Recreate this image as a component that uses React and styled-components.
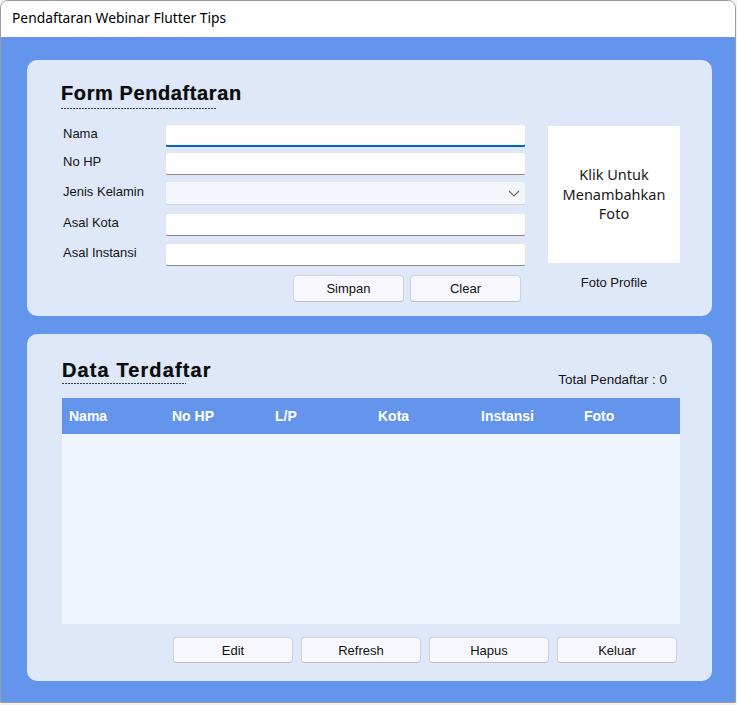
import React from 'react';
import styled, { createGlobalStyle } from 'styled-components';

const GlobalStyle = createGlobalStyle`
  html, body { margin: 0; padding: 0; background: #f2f2f2; }
  body { font-family: "Liberation Sans", Arial, sans-serif; color: #111; }
  * { box-sizing: border-box; }
`;

const Window = styled.div`
  width: 736px;
  height: 703px;
  border: 1px solid #9b9b9b;
  border-radius: 8px 8px 0 0;
  overflow: hidden;
  display: flex;
  flex-direction: column;
  background: #fff;
`;

const TitleBar = styled.div`
  height: 36px;
  flex: none;
  display: flex;
  align-items: center;
  padding: 0 0 3px 11px;
  background: #ffffff;
  font-family: "Noto Sans", "Liberation Sans", sans-serif;
  font-size: 13.8px;
  color: #000;
`;

const Client = styled.div`
  flex: 1;
  background: #6495ed;
  padding: 23px 23px 21px 26px;
  display: flex;
  flex-direction: column;
  gap: 18px;
`;

const Panel = styled.section`
  background: #dfe8f9;
  border-radius: 10px;
  padding: ${p => p.$pad};
  display: flex;
  flex-direction: column;
`;

const TitleBlock = styled.div`
  display: flex;
  flex-direction: column;
  align-items: flex-start;
`;

const Heading = styled.h2`
  margin: 0;
  font-size: 20px;
  line-height: 24px;
  font-weight: 700;
  letter-spacing: ${p => p.$ls || '0.6px'};
  color: #0d0d0d;
  text-shadow: 0 0 0.7px rgba(0, 0, 0, 0.5);
`;

const Dashes = styled.div`
  width: ${p => p.$w}px;
  height: 1px;
  margin-top: ${p => p.$gap}px;
  background: repeating-linear-gradient(90deg, #3c3c3c 0 2px, transparent 2px 3px);
`;

const FormArea = styled.div`
  display: flex;
  align-items: flex-start;
  margin-top: 15px;
`;

const Fields = styled.div`
  width: 465px;
  display: flex;
  flex-direction: column;
`;

const FieldRow = styled.div`
  display: grid;
  grid-template-columns: 104px 1fr;
  align-items: center;
  margin-top: ${p => p.$mt}px;
`;

const Label = styled.label`
  padding: 0 0 4px 2px;
  font-size: 13px;
  line-height: 15px;
  color: #141414;
`;

const TextBox = styled.input`
  display: block;
  width: 100%;
  height: 23px;
  margin: 0;
  padding: 0 6px;
  font: 13px "Liberation Sans", Arial, sans-serif;
  background: #ffffff;
  border: 1px solid #e2e5ea;
  border-bottom: ${p => (p.$active ? '2px solid #0067c0' : '1px solid #8a8a8a')};
  border-radius: 3px;
  outline: none;
`;

const Combo = styled.div`
  height: 24px;
  display: flex;
  align-items: center;
  justify-content: flex-end;
  padding-right: 5px;
  background: #f3f6fb;
  border: 1px solid #e2e6ed;
  border-bottom-color: #cdd3dc;
  border-radius: 3px;
`;

const ButtonRow = styled.div`
  display: flex;
  justify-content: flex-end;
  gap: ${p => p.$gap}px;
  margin-top: ${p => p.$mt}px;
  padding-right: ${p => p.$pr}px;
`;

const Button = styled.button`
  width: ${p => p.$w}px;
  height: ${p => p.$h}px;
  margin: 0;
  padding: 0;
  background: #f6f8fd;
  border: 1px solid #cfd4dc;
  border-bottom-color: #b9bfc8;
  border-radius: 4px;
  font: 13px "Liberation Sans", Arial, sans-serif;
  color: #111;
`;

const PhotoColumn = styled.div`
  margin: 2px 0 0 22px;
  width: 132px;
  display: flex;
  flex-direction: column;
  align-items: center;
`;

const PhotoBox = styled.div`
  width: 132px;
  height: 137px;
  background: #ffffff;
  display: flex;
  align-items: center;
  justify-content: center;
  text-align: center;
  font-family: "Noto Sans", "Liberation Sans", sans-serif;
  font-size: 14.5px;
  line-height: 19.5px;
  color: #1a1a1a;
`;

const Caption = styled.div`
  margin-top: 12px;
  font-size: 13px;
  line-height: 15px;
  color: #141414;
`;

const HeaderRow = styled.div`
  display: flex;
  justify-content: space-between;
  align-items: flex-end;
`;

const Total = styled.div`
  margin: 0 13px -3px 0;
  font-size: 13.4px;
  line-height: 15px;
  color: #141414;
`;

const Table = styled.div`
  margin-top: 14px;
  width: 618px;
  display: flex;
  flex-direction: column;
`;

const TableHead = styled.div`
  height: 36px;
  display: grid;
  grid-template-columns: repeat(5, 103px) 1fr;
  align-items: center;
  padding-left: 7px;
  background: #6495ed;
  color: #ffffff;
  font-size: 14px;
  font-weight: 700;
`;

const TableBody = styled.div`
  height: 190px;
  background: #eef5fe;
`;

const columns = ['Nama', 'No HP', 'L/P', 'Kota', 'Instansi', 'Foto'];

const Chevron = () => (
  <svg width="12" height="7" viewBox="0 0 12 7" fill="none">
    <path d="M1 1l5 5 5-5" stroke="#6a6a6a" strokeWidth="1.1" />
  </svg>
);

export default function App() {
  return (
    <>
      <GlobalStyle />
      <Window>
        <TitleBar>Pendaftaran Webinar Flutter Tips</TitleBar>
        <Client>
          <Panel $pad="21px 32px 14px 34px">
            <TitleBlock>
              <Heading>Form Pendaftaran</Heading>
              <Dashes $w={155} $gap={3} />
            </TitleBlock>
            <FormArea>
              <Fields>
                <FieldRow $mt={0}>
                  <Label>Nama</Label>
                  <TextBox $active />
                </FieldRow>
                <FieldRow $mt={5}>
                  <Label>No HP</Label>
                  <TextBox />
                </FieldRow>
                <FieldRow $mt={6}>
                  <Label>Jenis Kelamin</Label>
                  <Combo>
                    <Chevron />
                  </Combo>
                </FieldRow>
                <FieldRow $mt={8}>
                  <Label>Asal Kota</Label>
                  <TextBox />
                </FieldRow>
                <FieldRow $mt={7}>
                  <Label>Asal Instansi</Label>
                  <TextBox />
                </FieldRow>
                <ButtonRow $gap={6} $mt={9} $pr={5}>
                  <Button $w={111} $h={27}>Simpan</Button>
                  <Button $w={111} $h={27}>Clear</Button>
                </ButtonRow>
              </Fields>
              <PhotoColumn>
                <PhotoBox>
                  Klik Untuk<br />Menambahkan<br />Foto
                </PhotoBox>
                <Caption>Foto Profile</Caption>
              </PhotoColumn>
            </FormArea>
          </Panel>
          <Panel $pad="24px 32px 18px 35px">
            <HeaderRow>
              <TitleBlock>
                <Heading $ls="1.1px">Data Terdaftar</Heading>
                <Dashes $w={124} $gap={1} />
              </TitleBlock>
              <Total>Total Pendaftar : 0</Total>
            </HeaderRow>
            <Table>
              <TableHead>
                {columns.map(c => (
                  <span key={c}>{c}</span>
                ))}
              </TableHead>
              <TableBody />
            </Table>
            <ButtonRow $gap={8} $mt={13} $pr={3}>
              <Button $w={120} $h={26}>Edit</Button>
              <Button $w={120} $h={26}>Refresh</Button>
              <Button $w={120} $h={26}>Hapus</Button>
              <Button $w={120} $h={26}>Keluar</Button>
            </ButtonRow>
          </Panel>
        </Client>
      </Window>
    </>
  );
}
